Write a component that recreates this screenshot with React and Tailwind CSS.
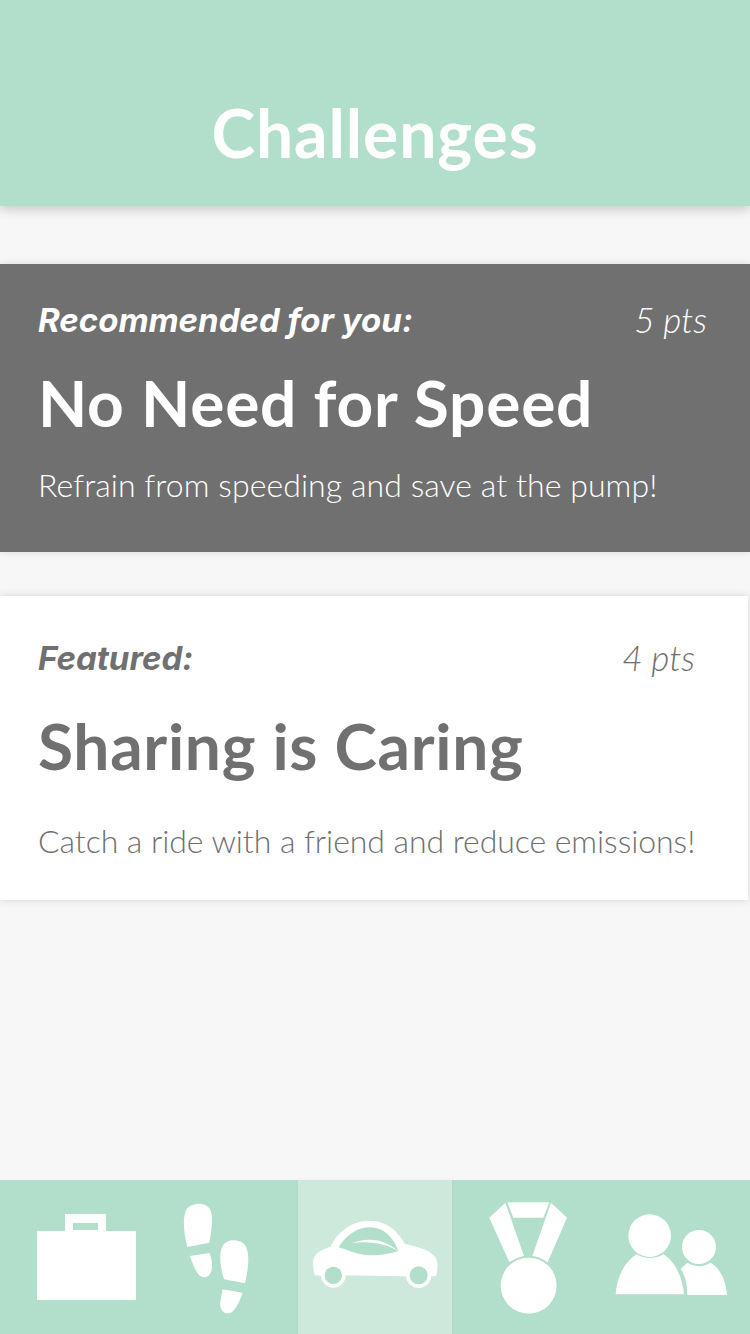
const GREEN = '#b2dfcb'

function Briefcase() {
  return (
    <svg viewBox="0 0 149 154" className="w-full h-full">
      <path fillRule="evenodd" fill="#fff" d="M37 51H65V34H106V51H136V120H37ZM73 43V50H98V43Z" />
    </svg>
  )
}

function Steps() {
  return (
    <svg viewBox="0 0 149 154" className="w-full h-full">
      <g transform="translate(-149 -10) scale(0.3333)" fill="#fff">
        <path d="M562 231C552 190 548 150 556 125C565 100 610 92 628 115C642 135 635 180 628 218Z" />
        <path d="M570 258L628 249C638 270 640 300 628 315C615 328 600 322 590 305C582 292 575 275 570 258Z" />
        <path d="M672 328C660 290 656 250 668 228C680 205 725 205 738 230C750 255 745 300 735 340Z" />
        <path d="M668 358L727 368C720 395 705 425 688 430C668 432 656 415 662 390Z" />
      </g>
    </svg>
  )
}

function Car() {
  return (
    <svg viewBox="0 0 154 154" className="w-full h-full">
      <g transform="translate(-8 -10) scale(0.3333)">
        <path fill="#fff" d="M75 315C68 300 68 270 72 262C80 245 100 238 122 230C140 190 180 152 240 152C290 152 325 185 345 222C380 230 425 240 438 265C445 280 443 305 438 318L410 320L168 316L92 318Z" />
        <circle cx="130" cy="316" r="37" fill="#fff" />
        <circle cx="130" cy="316" r="26" fill={GREEN} />
        <circle cx="386" cy="316" r="38" fill="#fff" />
        <circle cx="386" cy="316" r="27" fill={GREEN} />
        <path fill={GREEN} d="M146 232C170 195 200 172 240 172C280 172 310 200 325 243C290 255 255 258 225 255C195 250 170 240 146 232Z" />
        <path fill="#fff" d="M185 220C220 205 275 200 325 243C290 222 240 210 185 220Z" />
      </g>
    </svg>
  )
}

function Medal() {
  return (
    <svg viewBox="0 0 149 154" className="w-full h-full">
      <g transform="translate(8 -10) scale(0.3333)">
        <path fill="#fff" d="M142 97H268L250 143H160Z" />
        <path fill="#fff" d="M136 98L88 143L148 277L192 258Z" />
        <path fill="#fff" d="M273 98L321 143L263 277L217 258Z" />
        <circle cx="206" cy="347" r="90" fill={GREEN} />
        <circle cx="206" cy="347" r="84" fill="#fff" />
      </g>
    </svg>
  )
}

function People() {
  return (
    <svg viewBox="0 0 149 154" className="w-full h-full">
      <g transform="translate(-141 -10) scale(0.3333)" fill="#fff">
        <circle cx="569" cy="197" r="64" />
        <circle cx="717" cy="231" r="51" />
        <path d="M467 373C470 320 495 275 530 253C555 268 585 268 610 253C645 275 668 320 672 373Z" />
        <path d="M682 375C682 340 675 315 662 297L682 278C705 292 730 292 752 278C780 295 798 330 801 375Z" />
      </g>
    </svg>
  )
}

export default function App() {
  return (
    <div className="flex flex-col w-[750px] h-[1334px] overflow-hidden bg-[#f7f7f7] font-['Lato',sans-serif]">
      {/* Header */}
      <header className="relative h-[206px] shrink-0 flex items-end justify-center pb-[35px] bg-[#b2dfcb] shadow-[0_4px_10px_rgba(0,0,0,0.18)]">
        <h1 className="text-[66px] leading-[76px] font-bold text-white tracking-[0.9px]">Challenges</h1>
      </header>

      <main className="flex-1 flex flex-col pt-[58px] gap-[44px]">
        {/* Recommended */}
        <section className="h-[288px] pl-[38px] pr-[43px] pt-[38px] bg-[#707070] text-white shadow-[0_0_8px_rgba(0,0,0,0.12)]">
          <div className="flex items-center justify-between h-[38px]">
            <span className="font-['Inter',sans-serif] italic font-bold text-[33px]">Recommended for you:</span>
            <span className="italic font-light text-[35px] -translate-y-[2px]">5 pts</span>
          </div>
          <h2 className="mt-[25px] text-[64px] leading-[76px] font-bold tracking-[0.8px]">No Need for Speed</h2>
          <p className="mt-[24px] text-[32px] leading-[40px] font-light tracking-[0.07px] whitespace-nowrap">Refrain from speeding and save at the pump!</p>
        </section>

        {/* Featured */}
        <section className="w-[748px] h-[304px] pl-[38px] pr-[53px] pt-[44px] bg-white text-[#707070] shadow-[0_0_8px_rgba(0,0,0,0.14)]">
          <div className="flex items-center justify-between h-[38px]">
            <span className="font-['Inter',sans-serif] italic font-bold text-[33px]">Featured:</span>
            <span className="italic font-light text-[35px] -translate-y-[2px]">4 pts</span>
          </div>
          <h2 className="mt-[30px] text-[64px] leading-[76px] font-bold tracking-[0.7px]">Sharing is Caring</h2>
          <p className="mt-[37px] text-[32px] leading-[40px] font-light tracking-[-0.06px] whitespace-nowrap">Catch a ride with a friend and reduce emissions!</p>
        </section>
      </main>

      {/* Bottom nav */}
      <nav className="h-[154px] shrink-0 flex bg-[#b2dfcb]">
        <div className="w-[149px]"><Briefcase /></div>
        <div className="w-[149px]"><Steps /></div>
        <div className="w-[154px] bg-[#cce9dc] shadow-[0_0_3px_rgba(0,0,0,0.05)]"><Car /></div>
        <div className="w-[149px]"><Medal /></div>
        <div className="w-[149px]"><People /></div>
      </nav>
    </div>
  )
}
